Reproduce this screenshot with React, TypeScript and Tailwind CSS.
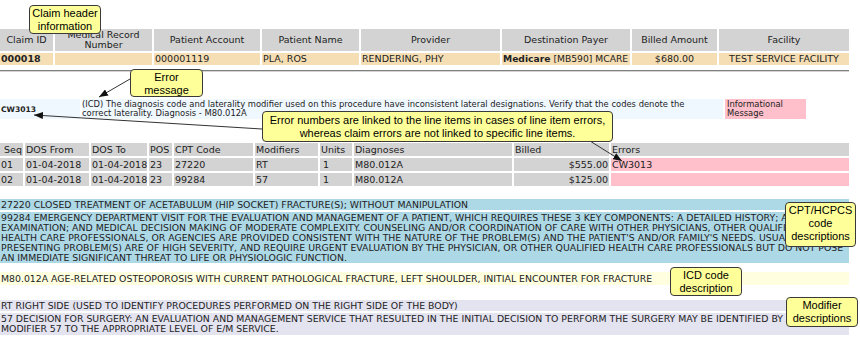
const claimHeaders = [
  'Claim ID',
  'Medical Record Number',
  'Patient Account',
  'Patient Name',
  'Provider',
  'Destination Payer',
  'Billed Amount',
  'Facility',
];

const lineHeaders = ['Seq', 'DOS From', 'DOS To', 'POS', 'CPT Code', 'Modifiers', 'Units', 'Diagnoses', 'Billed', 'Errors'];

const lineItems = [
  { seq: '01', from: '01-04-2018', to: '01-04-2018', pos: '23', cpt: '27220', mod: 'RT', units: '1', dx: 'M80.012A', billed: '$555.00', err: 'CW3013' },
  { seq: '02', from: '01-04-2018', to: '01-04-2018', pos: '23', cpt: '99284', mod: '57', units: '1', dx: 'M80.012A', billed: '$125.00', err: '' },
];

const cpt99284 = [
  '99284 EMERGENCY DEPARTMENT VISIT FOR THE EVALUATION AND MANAGEMENT OF A PATIENT, WHICH REQUIRES THESE 3 KEY COMPONENTS: A DETAILED HISTORY; A DETAILED',
  'EXAMINATION; AND MEDICAL DECISION MAKING OF MODERATE COMPLEXITY. COUNSELING AND/OR COORDINATION OF CARE WITH OTHER PHYSICIANS, OTHER QUALIFIED',
  "HEALTH CARE PROFESSIONALS, OR AGENCIES ARE PROVIDED CONSISTENT WITH THE NATURE OF THE PROBLEM(S) AND THE PATIENT'S AND/OR FAMILY'S NEEDS. USUALLY, THE",
  'PRESENTING PROBLEM(S) ARE OF HIGH SEVERITY, AND REQUIRE URGENT EVALUATION BY THE PHYSICIAN, OR OTHER QUALIFIED HEALTH CARE PROFESSIONALS BUT DO NOT POSE',
  'AN IMMEDIATE SIGNIFICANT THREAT TO LIFE OR PHYSIOLOGIC FUNCTION.',
];

const mod57 = [
  '57 DECISION FOR SURGERY: AN EVALUATION AND MANAGEMENT SERVICE THAT RESULTED IN THE INITIAL DECISION TO PERFORM THE SURGERY MAY BE IDENTIFIED BY ADDING THE',
  'MODIFIER 57 TO THE APPROPRIATE LEVEL OF E/M SERVICE.',
];

function Callout({ className, lines }: { className: string; lines: string[] }) {
  return (
    <div
      className={`absolute z-20 overflow-hidden rounded-[4px] border border-[#3a3a3a] bg-[#ffff99] pt-[1px] text-center font-['Liberation_Sans',Arial,sans-serif] text-[11px] leading-[13px] text-black ${className}`}
    >
      {lines.map((l) => (
        <div key={l}>{l}</div>
      ))}
    </div>
  );
}

function Lines({ lines }: { lines: string[] }) {
  return (
    <>
      {lines.map((l) => (
        <div key={l} className="whitespace-nowrap">
          {l}
        </div>
      ))}
    </>
  );
}

export default function App() {
  return (
    <div className="relative h-[337px] w-[860px] overflow-hidden bg-white font-['DejaVu_Sans',Verdana,sans-serif] text-[9.5px] text-[#222]">
      <div className="w-[849px] pt-[29px]">
        {/* Claim header */}
        <div className="grid grid-cols-[53px_97px_106px_97px_139px_128px_85px_130px] gap-[2px]">
          {claimHeaders.map((h) => (
            <div key={h} className="flex h-[22px] items-center justify-center bg-[#d3d3d3] px-[2px] text-center leading-[10px]">
              {h}
            </div>
          ))}
          <div className="h-[12px] bg-[#f5deb3] pl-[1px] font-bold leading-[12px]">000018</div>
          <div className="h-[12px] bg-[#f5deb3]" />
          <div className="h-[12px] bg-[#f5deb3] pl-[1px] leading-[12px]">000001119</div>
          <div className="h-[12px] bg-[#f5deb3] pl-[1px] leading-[12px]">PLA, ROS</div>
          <div className="h-[12px] bg-[#f5deb3] pl-[1px] leading-[12px]">RENDERING, PHY</div>
          <div className="h-[12px] overflow-hidden whitespace-nowrap bg-[#f5deb3] pl-[1px] text-[9.2px] leading-[12px]">
            <b>Medicare</b> [MB590] MCARE
          </div>
          <div className="h-[12px] bg-[#f5deb3] text-center leading-[12px]">$680.00</div>
          <div className="h-[12px] bg-[#f5deb3] text-center leading-[12px]">TEST SERVICE FACILITY</div>
        </div>

        <div className="mt-[5px] border-t border-b border-t-[#7f7f7f] border-b-[#d4d4d4]" />

        {/* Claim errors */}
        <div className="mt-[27px] flex h-[20px] gap-[2px] text-[8.4px] leading-[9px]">
          <div className="flex w-[80px] items-center bg-[#f0f8ff] pl-[1px] text-[7.6px] font-bold">CW3013</div>
          <div className="w-[641px] bg-[#f0f8ff] pt-[1px]">
            <Lines
              lines={[
                '(ICD) The diagnosis code and laterality modifier used on this procedure have inconsistent lateral designations. Verify that the codes denote the',
                'correct laterality. Diagnosis - M80.012A',
              ]}
            />
          </div>
          <div className="w-[81px] bg-[#ffc0cb] pl-[2px] pt-[1px]">
            Informational
            <br />
            Message
          </div>
        </div>

        {/* Line items */}
        <div className="mt-[24px] grid grid-cols-[23px_64px_56px_23px_79px_63px_32px_158px_95px_238px] gap-[2px] leading-[13px]">
          {lineHeaders.map((h, i) => (
            <div key={h} className={`h-[13px] bg-[#d3d3d3] ${i === 0 ? 'pl-[4px]' : 'pl-[1px]'}`}>
              {h}
            </div>
          ))}
          {lineItems.map((r) => (
            <div key={r.seq} className="contents">
              <div className="h-[13px] bg-[#d3d3d3] pl-[1px]">{r.seq}</div>
              <div className="h-[13px] bg-[#d3d3d3] pl-[1px]">{r.from}</div>
              <div className="h-[13px] overflow-hidden whitespace-nowrap bg-[#d3d3d3] pl-[1px]">{r.to}</div>
              <div className="h-[13px] bg-[#d3d3d3] pl-[1px]">{r.pos}</div>
              <div className="h-[13px] bg-[#d3d3d3] pl-[1px]">{r.cpt}</div>
              <div className="h-[13px] bg-[#d3d3d3] pl-[1px]">{r.mod}</div>
              <div className="h-[13px] bg-[#d3d3d3] pl-[3px]">{r.units}</div>
              <div className="h-[13px] bg-[#d3d3d3] pl-[1px]">{r.dx}</div>
              <div className="h-[13px] bg-[#d3d3d3] pr-[1px] text-right">{r.billed}</div>
              <div className="h-[13px] bg-[#ffc0cb] pl-[1px]">{r.err}</div>
            </div>
          ))}
        </div>

        <div className="text-[9.35px]">
          {/* CPT/HCPCS descriptions */}
          <div className="mt-[13px] flex flex-col gap-[2px] leading-[10px]">
            <div className="bg-[#add8e6] py-[0.5px] pl-[1px]">
              27220 CLOSED TREATMENT OF ACETABULUM (HIP SOCKET) FRACTURE(S); WITHOUT MANIPULATION
            </div>
            <div className="bg-[#add8e6] py-[0.5px] pl-[1px]">
              <Lines lines={cpt99284} />
            </div>
          </div>

          {/* ICD descriptions */}
          <div className="mt-[9px] bg-[#ffffe0] py-[1.5px] pl-[1px] leading-[10px]">
            M80.012A AGE-RELATED OSTEOPOROSIS WITH CURRENT PATHOLOGICAL FRACTURE, LEFT SHOULDER, INITIAL ENCOUNTER FOR FRACTURE
          </div>

          {/* Modifier descriptions */}
          <div className="mt-[15px] flex flex-col gap-[2px] leading-[10px]">
            <div className="bg-[#e4e3f0] py-[0.5px] pl-[1px]">
              RT RIGHT SIDE (USED TO IDENTIFY PROCEDURES PERFORMED ON THE RIGHT SIDE OF THE BODY)
            </div>
            <div className="bg-[#e4e3f0] py-[1px] pl-[1px]">
              <Lines lines={mod57} />
            </div>
          </div>
        </div>
      </div>

      {/* Annotation arrows */}
      <svg className="pointer-events-none absolute left-0 top-0 z-10" width="860" height="337">
        <defs>
          <marker id="ah" markerWidth="9" markerHeight="7" refX="9" refY="3.5" orient="auto" markerUnits="userSpaceOnUse">
            <path d="M0,0 L9,3.5 L0,7 z" fill="#111" />
          </marker>
        </defs>
        <line x1="130" y1="79" x2="99" y2="97" stroke="#333" strokeWidth="1" markerEnd="url(#ah)" />
        <line x1="262" y1="129" x2="34" y2="115" stroke="#333" strokeWidth="1" markerEnd="url(#ah)" />
        <line x1="590" y1="141" x2="622" y2="161" stroke="#333" strokeWidth="1" markerEnd="url(#ah)" />
      </svg>

      <Callout className="left-[29px] top-[5px] h-[29px] w-[72px]" lines={['Claim header', 'information']} />
      <Callout className="left-[130px] top-[69px] h-[28px] w-[73px]" lines={['Error', 'message']} />
      <Callout
        className="left-[262px] top-[111px] h-[31px] w-[351px] pt-[2px]"
        lines={[
          'Error numbers are linked to the line items in cases of line item errors,',
          'whereas claim errors are not linked to specific line items.',
        ]}
      />
      <Callout className="left-[785px] top-[202px] h-[45px] w-[71px]" lines={['CPT/HCPCS', 'code', 'descriptions']} />
      <Callout className="left-[670px] top-[267px] h-[29px] w-[72px]" lines={['ICD code', 'description']} />
      <Callout className="left-[786px] top-[297px] h-[30px] w-[72px]" lines={['Modifier', 'descriptions']} />
    </div>
  );
}
